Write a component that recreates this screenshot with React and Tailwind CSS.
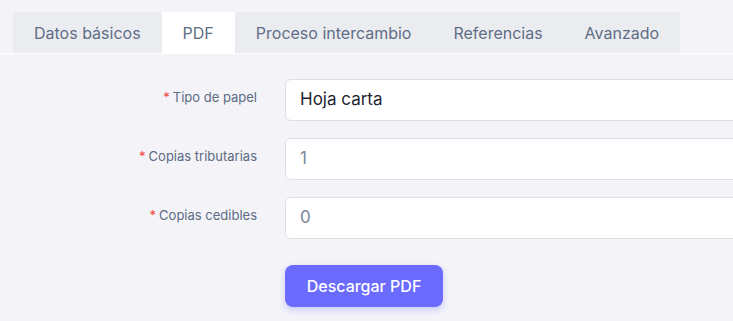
import React, { useState } from "react";

const tabs = ["Datos básicos", "PDF", "Proceso intercambio", "Referencias", "Avanzado"];

function Field({ label, value, muted }) {
  return (
    <div className="flex items-start">
      <label className="w-[257px] shrink-0 pt-[9px] text-right text-[13px] text-[#5b6b82]">
        <span className="text-[#f04438] mr-[3px]">*</span>
        {label}
      </label>
      <div className="ml-[28px] w-[520px] shrink-0 h-[42px] rounded-md border border-[#dcdfe5] bg-white flex items-center px-[14px]">
        <span className={muted ? "text-[17px] text-[#7a8699]" : "text-[17px] text-[#1f2533]"}>
          {value}
        </span>
      </div>
    </div>
  );
}

export default function App() {
  const [active, setActive] = useState("PDF");

  return (
    <div
      className="w-[733px] h-[321px] overflow-hidden bg-[#f3f3f8]"
      style={{ fontFamily: "Inter, 'Noto Sans', sans-serif" }}
    >
      {/* Tabs */}
      <div className="pt-[12px] pl-[13px] flex border-b border-white">
        <div className="flex bg-[#ebecf0] h-[41px]">
          {tabs.map((t) => (
            <button
              key={t}
              onClick={() => setActive(t)}
              className={
                t === active
                  ? "px-[21px] text-[16px] text-[#5f6e86] bg-white"
                  : "px-[21px] text-[16px] text-[#5f6e86]"
              }
            >
              {t}
            </button>
          ))}
        </div>
      </div>

      {/* Form */}
      <div className="mt-[25px] flex flex-col gap-[17px]">
        <Field label="Tipo de papel" value="Hoja carta" />
        <Field label="Copias tributarias" value="1" muted />
        <Field label="Copias cedibles" value="0" muted />
      </div>

      <div className="mt-[26px] pl-[285px]">
        <button className="h-[42px] w-[158px] rounded-lg bg-[#6b6bff] text-white text-[16px] font-medium shadow-[0_3px_6px_rgba(107,107,255,0.3)]">
          Descargar PDF
        </button>
      </div>
    </div>
  );
}
